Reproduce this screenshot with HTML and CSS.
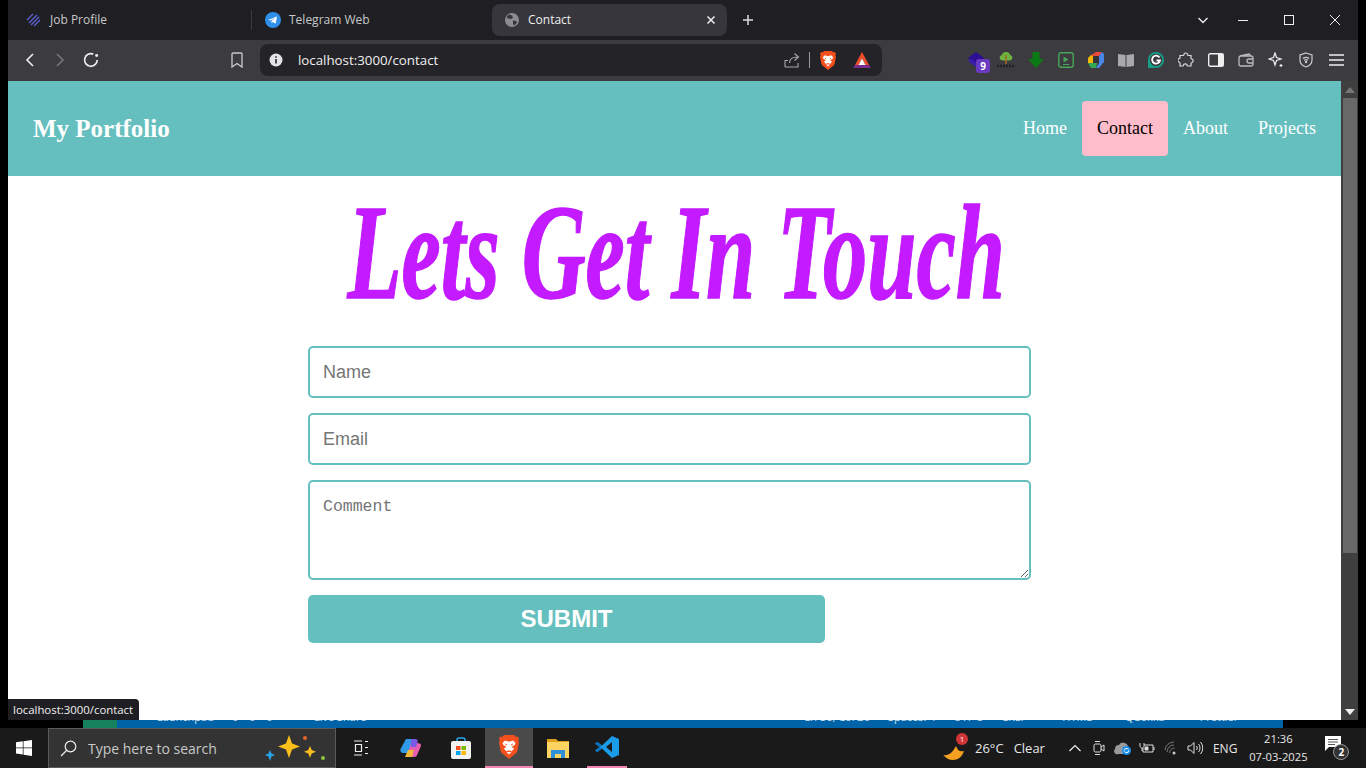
FILE: index.html
```html
<!DOCTYPE html>
<html>

<head>
<meta charset="utf-8">
<title>Contact</title>
<link rel="stylesheet" href="styles.css">
</head>

<body>
<svg class="defs" width="0" height="0">
  <symbol id="brave" viewBox="0 0 20 24">
    <path fill="#f4501e" d="M5 0h10l1.500 1.700 2-.3L20 3.500l-.7 2 .7 2-1.600 8.200c-.4 1.700-1.500 2.800-3 3.800L10 24l-5.400-4.500c-1.500-1-2.600-2.100-3-3.800L0 7.500l.7-2L0 3.500l1.500-2.100 2 .3z"/>
    <path fill="#fff" d="M6 5.500l4 1.200 4-1.200 2.500 2.500-.8 2-2.700 1.500.8 1.500 1.500.5-2.800 3-1.100-1H8.600l-1.100 1-2.800-3 1.500-.5.800-1.500L4.300 10l-.8-2z"/>
    <path fill="#fff" d="M7.500 17h5L10 19.500z"/>
    <path fill="#f4501e" d="M5.500 8.500l2.500.8-.8 1.200zM14.500 8.500l-2.500.8.800 1.200z"/>
  </symbol>
</svg>

<div class="desktop">
  <div class="window">
    <div class="tabbar">
      <div class="tab tab-first">
        <svg class="fav" width="16" height="16" viewBox="0 0 16 16" fill="none" stroke="#5a5fd0" stroke-width="1.400"><path d="M1 8l6-6M3 11l8-8M5 13l8-8M8 14l6-6"/></svg>
        <span>Job Profile</span>
      </div>
      <div class="tab tab-second">
        <svg class="fav" width="16" height="16" viewBox="0 0 16 16"><circle cx="8" cy="8" r="8" fill="#2f8fe8"/><path fill="#fff" d="M3 8l9-3.600-1.400 7.400-2.600-1.900-1.300 1.300-.3-2.300 3.700-3-4.800 2.700z"/></svg>
        <span>Telegram Web</span>
      </div>
      <div class="tab tab-active">
        <svg class="fav" width="14" height="14" viewBox="0 0 14 14"><circle cx="7" cy="7" r="7" fill="#8b8c90"/><path fill="#36363c" d="M4 1.500l3 1 1 2-2 1.500-3-.5-1.500-1.500zM8 7.500l3 .5 1 1.500-2.500 3-1.500-1.500z"/></svg>
        <span class="tab-name">Contact</span>
        <svg width="10" height="10" viewBox="0 0 10 10" stroke="#eee" stroke-width="1.500"><path d="M1.500 1.500l7 7M8.500 1.500l-7 7"/></svg>
      </div>
      <svg class="newtab" width="12" height="12" viewBox="0 0 12 12" stroke="#ddd" stroke-width="1.500"><path d="M6 1v10M1 6h10"/></svg>
      <div class="winbtns">
        <svg class="win-list" width="12" height="12" viewBox="0 0 12 12" fill="none" stroke="#eee" stroke-width="1.300"><path d="M1.500 4l4.500 4.500L10.500 4"/></svg>
        <svg width="12" height="12" viewBox="0 0 12 12" stroke="#eee"><path d="M1 6.500h10"/></svg>
        <svg width="12" height="12" viewBox="0 0 12 12" fill="none" stroke="#eee"><rect x="1.500" y="1.500" width="9" height="9"/></svg>
        <svg width="12" height="12" viewBox="0 0 12 12" stroke="#eee"><path d="M1 1l10 10M11 1L1 11"/></svg>
      </div>
    </div>

    <div class="toolbar">
      <div class="navbtns">
        <svg width="12" height="16" viewBox="0 0 12 16" fill="none" stroke="#eee" stroke-width="1.600"><path d="M9 2L3 8l6 6"/></svg>
        <svg width="12" height="16" viewBox="0 0 12 16" fill="none" stroke="#77777b" stroke-width="1.600"><path d="M3 2l6 6-6 6"/></svg>
        <svg class="reload" width="16" height="16" viewBox="0 0 16 16" fill="none" stroke="#eee" stroke-width="1.500"><path d="M13.500 8A5.600 5.600 0 1 1 10 2.800"/><circle cx="13" cy="4" r="1.300" fill="#eee" stroke="none"/></svg>
      </div>
      <svg class="bookmark" width="12" height="16" viewBox="0 0 12 16" fill="none" stroke="#ccc" stroke-width="1.300"><path d="M1 2a1 1 0 0 1 1-1h8a1 1 0 0 1 1 1v13L6 11.500 1 15z"/></svg>
      <div class="omnibox">
        <svg width="14" height="14" viewBox="0 0 14 14"><circle cx="7" cy="7" r="6.500" fill="#e4e4e6"/><path stroke="#232328" stroke-width="1.600" d="M7 6v4.500M7 3.300v1.500"/></svg>
        <span class="url">localhost:3000/contact</span>
        <svg class="share" width="16" height="16" viewBox="0 0 16 16" fill="none" stroke="#aaa" stroke-width="1.100"><path d="M1 15V8.500h3M1 15h13v-4M5.500 11c0-4 2.500-6 8-6M10.500 1.500l4 3.500-4 3.500"/></svg>
        <span class="omnisep"></span>
        <svg class="lion" width="16" height="19"><use href="#brave"/></svg>
        <svg class="bat" width="18" height="16" viewBox="0 0 18 16"><path fill="#7b2d8e" d="M0 16h18l-2-3H2z"/><path fill="#f04e2a" d="M9 0l7 13h-3.500L9 6.500 5.500 13H2z"/><path fill="#fff" d="M9 6.500l3.500 6.500h-7z"/></svg>
      </div>
      <div class="extensions">
        <span class="ext">
          <svg width="18" height="16" viewBox="0 0 18 16"><path fill="#2d0f96" d="M9 0l8 6-8 6-8-6z"/><path fill="#3c1cb0" d="M1 9l3-2 5 4 5-4 3 2-8 6z"/></svg>
          <b class="ext-count">9</b>
        </span>
        <span class="ext"><svg width="18" height="18" viewBox="0 0 18 18"><path fill="#6db33f" d="M9 1c3 0 4 2 4 3 2 .5 3 2 2 4-.5 1-2 1.500-6 1.500S3.500 9 3 8C2 6 3 4.500 5 4c0-1 1-3 4-3z"/><path stroke="#a06a20" stroke-width="1.500" d="M9 4v9"/><path stroke="#222" stroke-width="2.500" stroke-dasharray="2 1" d="M0 15h18"/></svg></span>
        <span class="ext"><svg width="16" height="16" viewBox="0 0 16 16"><path fill="#0c7a14" d="M4.500 0h7v7H16l-8 9-8-9h4.500z"/></svg></span>
        <span class="ext"><svg width="16" height="16" viewBox="0 0 16 16" fill="none"><rect x=".8" y=".8" width="14.400" height="14.400" rx="2" stroke="#46a858" stroke-width="1.400"/><path fill="#46a858" d="M5.500 4.500l5 3-5 3z"/><path stroke="#46a858" d="M5 12.500h6"/></svg></span>
        <span class="ext"><svg width="16" height="16" viewBox="0 0 16 16"><path fill="#e8493a" d="M3 3l5-3h6L11 4H5z"/><path fill="#f4b400" d="M0 6l3-3 2 1v7H0z"/><path fill="#34a853" d="M0 11h9l-1 5H3z"/><path fill="#4a86e8" d="M11 4l3-4 2 2v8l-5 6H8l3-5z"/><path fill="#333" d="M5 4h6v7H5z"/></svg></span>
        <span class="ext"><svg width="16" height="14" viewBox="0 0 16 14"><path fill="#a9a9ac" d="M0 1l7.500 1v12L0 13zM16 1L8.500 2v12l7.500-1z"/></svg></span>
        <span class="ext"><svg width="16" height="16" viewBox="0 0 16 16"><circle cx="8" cy="8" r="8" fill="#16a085"/><path fill="#16a085" d="M0 8v8h6z"/><circle cx="8" cy="8" r="6.200" fill="#3b3b40"/><path fill="none" stroke="#fff" stroke-width="1.800" d="M11.500 5.500A4 4 0 1 0 12 8.500H8.500"/></svg></span>
        <span class="ext"><svg width="16" height="16" viewBox="0 0 16 16" fill="none" stroke="#ddd" stroke-width="1.200"><path d="M6 2.500c0-2 3.500-2 3.500 0 0 1 .5 1 1.500 1h2v2.500c0 1 .5 1 1 1 1.500 0 1.500 3.500 0 3.500-.5 0-1 0-1 1v2.500h-3c-1 0-1-.5-1-1 0-1.500-3.500-1.500-3.500 0 0 .5 0 1-1 1H2v-3c0-1-.5-1-1-1-1.500 0-1.500-3.500 0-3.500.5 0 1 0 1-1V3.500h3c.5 0 1-.2 1-1z"/></svg></span>
        <span class="ext"><svg width="16" height="14" viewBox="0 0 16 14"><rect x=".7" y=".7" width="14.600" height="12.600" rx="1.500" fill="none" stroke="#eee" stroke-width="1.400"/><rect x="10" y="1" width="5" height="12" fill="#eee"/></svg></span>
        <span class="ext"><svg width="16" height="14" viewBox="0 0 16 14" fill="none" stroke="#bbb" stroke-width="1.300"><path d="M13 3H3a2 2 0 0 0-2 2v6a2 2 0 0 0 2 2h10a2 2 0 0 0 2-2V5a2 2 0 0 0-2-2zM2 3l9-2 2 2M15 6h-4a2 2 0 0 0 0 4h4"/></svg></span>
        <span class="ext"><svg width="16" height="16" viewBox="0 0 16 16" fill="none" stroke="#eee" stroke-width="1.200"><path d="M7 1l1.500 4.500L13 7 8.500 8.500 7 13 5.500 8.500 1 7l4.500-1.500z"/><path d="M13 12v3M11.500 13.500h3"/></svg></span>
        <span class="ext"><svg width="14" height="16" viewBox="0 0 14 16" fill="none" stroke="#ccc" stroke-width="1.200"><path d="M7 1l6 2v5c0 3.500-3 6-6 7-3-1-6-3.500-6-7V3z"/><path d="M3.800 6.500c2-1.500 4.400-1.500 6.400 0M5.200 8.300c1.100-.8 2.500-.8 3.600 0"/><circle cx="7" cy="10" r=".6" fill="#ccc"/></svg></span>
        <span class="ext"><svg width="15" height="12" viewBox="0 0 15 12" stroke="#eee" stroke-width="1.300"><path d="M0 1h15M0 6h15M0 11h15"/></svg></span>
      </div>
    </div>

    <div class="viewport">
      <div class="page">
        <div class="site-nav">
          <div class="site-title">My Portfolio</div>
          <div class="site-links">
            <a href="#home">Home</a>
            <a href="#contact" class="current">Contact</a>
            <a href="#about">About</a>
            <a href="#projects">Projects</a>
          </div>
        </div>
        <h1 class="touch-title">Lets Get In Touch</h1>
        <form class="contact-form">
          <input type="text" placeholder="Name">
          <input type="text" placeholder="Email">
          <textarea placeholder="Comment"></textarea>
          <button type="button">SUBMIT</button>
        </form>
        <div class="link-status">localhost:3000/contact</div>
      </div>
      <div class="scrollbar">
        <svg class="arrow" width="10" height="6" viewBox="0 0 10 6"><path fill="#777" d="M5 0l5 6H0z"/></svg>
        <div class="thumb"></div>
        <svg class="arrow" width="10" height="6" viewBox="0 0 10 6"><path fill="#eee" d="M0 0h10L5 6z"/></svg>
      </div>
    </div>
  </div>

  <div class="editor-strip">
    <span class="strip-green"></span>
    <div class="strip-blue">
      <span class="strip-launch">Launchpad</span>
      <span class="strip-errors">0 0 0</span>
      <span class="strip-live">Live Share</span>
      <span class="strip-ln">Ln 56, Col 20</span>
      <span>Spaces: 4</span>
      <span>UTF-8</span>
      <span>CRLF</span>
      <span class="strip-html">HTML</span>
      <span class="strip-quokka">Quokka</span>
      <span class="strip-prettier">Prettier</span>
    </div>
  </div>

  <div class="taskbar">
    <svg class="start" width="16" height="16" viewBox="0 0 16 16"><path fill="#fff" d="M0 2.300l6.800-1v6.200H0zM7.500 1.200L16 0v7.500H7.500zM0 8.300h6.800v6.300l-6.800-1zM7.500 8.300H16V16l-8.500-1.200z"/></svg>
    <div class="searchbox">
      <svg width="17" height="17" viewBox="0 0 17 17" fill="none" stroke="#eee" stroke-width="1.200"><circle cx="10.500" cy="6.500" r="5.300"/><path d="M6.500 10.500L1 16"/></svg>
      <span class="search-text">Type here to search</span>
      <svg class="sparkles" width="62" height="30" viewBox="0 0 62 30"><path fill="#2aa3e8" d="M6 17l1.500 3.500L11 22l-3.500 1.500L6 28l-1.500-4.500L1 22l3.500-1.500z"/><path fill="#fbbf1c" d="M25 2l3 8.500 8 3-8 3L25 25l-3-8.500-8-3 8-3z"/><path fill="#fbbf1c" d="M46 13l1.700 4 4.300 1.700-4.300 1.700-1.700 4.300-1.700-4.300-4.300-1.700 4.300-1.700z"/><circle cx="41" cy="5" r="2" fill="#e8662c"/><circle cx="59" cy="25" r="2" fill="#8cc63f"/></svg>
    </div>
    <div class="task-icons">
      <span class="task task-wide"><svg width="16" height="16" viewBox="0 0 16 16" fill="none" stroke="#eee" stroke-width="1.200"><path d="M1 1h8M1 15h8M2.500 4.500h6v7h-6zM12 1.500h3M12 7.500h3M12 13.500h3"/></svg></span>
      <span class="task task-wide"><svg width="22" height="22" viewBox="0 0 22 22"><path fill="#2f9be8" d="M6 2h7l-4 14H3C1 16 0 14 .5 12z"/><path fill="#e85fb0" d="M16 6h-5L7 20h7c2 0 3-1 3.500-3L21 9c.5-2-1-3-5-3z"/><path fill="#f5b93a" d="M5 20l3-7h6l-2 7z"/><path fill="#7a5be8" d="M11 2h4c2 0 3 1 2.500 3L16 10h-5z"/></svg></span>
      <span class="task"><svg width="20" height="22" viewBox="0 0 20 22"><path fill="none" stroke="#2aa3e8" stroke-width="1.500" d="M6 5V3a2 2 0 0 1 2-2h4a2 2 0 0 1 2 2v2"/><rect y="4" width="20" height="18" rx="2" fill="#f2f2f2"/><path fill="#f25022" d="M5 9h4.500v4H5z"/><path fill="#7fba00" d="M10.500 9H15v4h-4.500z"/><path fill="#00a4ef" d="M5 14h4.500v4H5z"/><path fill="#ffb900" d="M10.500 14H15v4h-4.500z"/></svg></span>
      <span class="task task-open"><svg width="20" height="24"><use href="#brave"/></svg></span>
      <span class="task"><svg width="22" height="20" viewBox="0 0 22 20"><path fill="#dfa01e" d="M0 1h9l2 2h11v4H0z"/><path fill="#fcd462" d="M0 4h22v16H0z"/><path fill="#2f8fd8" d="M4 12h14v8h-4v-4H8v4H4z"/></svg></span>
      <span class="task task-pinned"><svg width="24" height="24" viewBox="0 0 24 24"><path fill="#1a9ce8" d="M17 1l7 3v16l-7 3-10-9.500L2.500 17 0 15.500 4.500 12 0 8.500 2.500 7 7 10.500zM17 7l-6 5 6 5z"/><path fill="#0a6fb8" d="M0 8.500L2.500 7l4.500 3.500L4.500 12zM0 15.500L4.500 12 7 13.500 2.500 17z"/></svg></span>
    </div>
    <div class="tray">
      <span class="weather-icon">
        <svg width="24" height="24" viewBox="0 0 24 24"><path fill="#f5a020" d="M0 19c4 1 9-1 13-9 2 5 4 6 8 5-2 6-6 9-11 9-4 0-7-2-10-5z"/></svg>
        <b class="weather-badge">1</b>
      </span>
      <span class="temp">26°C</span>
      <span class="sky">Clear</span>
      <svg class="tray-chevron" width="12" height="8" viewBox="0 0 12 8" fill="none" stroke="#eee" stroke-width="1.200"><path d="M.5 7L6 1.500 11.500 7"/></svg>
      <svg class="tray-meet" width="12" height="16" viewBox="0 0 12 16" fill="none" stroke="#ddd"><rect x="1" y="4" width="7" height="8" rx="1.500"/><path d="M8 7l3-2v6l-3-2M2 1.500h5M2 14.500h5"/></svg>
      <svg class="tray-cloud" width="18" height="14" viewBox="0 0 18 14"><path fill="#9a9a9d" d="M1 8a4 4 0 0 1 4-4 5 5 0 0 1 9 1l-3 8H4a3 3 0 0 1-3-5z"/><circle cx="12.500" cy="9.500" r="4.500" fill="#1a8fe8"/><path stroke="#fff" fill="none" d="M10 9.500a2.500 2.500 0 0 1 4.500-1M15 9.500a2.500 2.500 0 0 1-4.500 1"/></svg>
      <svg class="tray-power" width="16" height="12" viewBox="0 0 16 12" fill="none" stroke="#ddd"><path d="M5 3h9v7H4V6M15 5v3M1 1v3c0 1 1 2 2 2s2-1 2-2V1M3 6v3"/><path fill="#ddd" d="M6 5h3v3H6z"/></svg>
      <svg class="tray-wifi" width="15" height="14" viewBox="0 0 15 14" fill="none" stroke="#77777a"><path d="M1 9a9 9 0 0 1 9-8M3 11a7 7 0 0 1 7-7M5.500 12a5 5 0 0 1 5-5"/><circle cx="10" cy="12" r="1.500" fill="#ccc" stroke="none"/></svg>
      <svg class="tray-sound" width="16" height="14" viewBox="0 0 16 14" fill="none" stroke="#ddd"><path d="M1 5h2.500L7 1.500v11L3.500 9H1zM9.500 5a3 3 0 0 1 0 4M11.500 3a6 6 0 0 1 0 8M13.500 1a9 9 0 0 1 0 12"/></svg>
      <span class="lang">ENG</span>
      <div class="clock">
        <span>21:36</span>
        <span>07-03-2025</span>
      </div>
      <span class="notify">
        <svg width="18" height="15" viewBox="0 0 18 15"><path fill="#fff" d="M0 0h16v11H4l-4 4z"/><path stroke="#555" d="M3 3.500h10M3 6h10M3 8.500h7"/></svg>
        <b class="notify-count">2</b>
      </span>
    </div>
  </div>
</div>
</body>
</html>
```

FILE: styles.css
```css
* {
  box-sizing: border-box;
}

html, body {
  margin: 0;
  height: 100%;
  overflow: hidden;
}

.defs {
  position: absolute;
}

.desktop {
  width: 1366px;
  height: 768px;
  background: #000;
  display: flex;
  flex-direction: column;
  font-family: "Open Sans", "Noto Sans", sans-serif;
  color: #ddd;
}

.window {
  margin: 0 8px;
  height: 720px;
  display: flex;
  flex-direction: column;
  flex: none;
}

/* Browser tabs */
.tabbar {
  height: 40px;
  flex: none;
  background: #1f1f23;
  display: flex;
  align-items: center;
  font-size: 12px;
}

.tab {
  display: flex;
  align-items: center;
  height: 32px;
}

.tab span {
  margin-top: -2px;
}

.fav {
  flex: none;
}

.tab-first {
  width: 244px;
  padding-left: 18px;
  gap: 8px;
  border-right: 1px solid #3c3c40;
  height: 20px;
  color: #c8c8ca;
}

.tab-second {
  width: 240px;
  padding-left: 13px;
  gap: 8px;
  color: #c8c8ca;
}

.tab-active {
  width: 235px;
  padding: 0 11px 0 13px;
  gap: 9px;
  background: #36363c;
  border-radius: 8px;
  color: #f0f0f0;
}

.tab-name {
  flex: 1;
}

.newtab {
  margin-left: 15px;
}

.winbtns {
  margin-left: auto;
  display: flex;
  gap: 34px;
  padding-right: 17px;
}

.winbtns .win-list {
  margin-right: -6px;
}

/* Address bar row */
.toolbar {
  height: 41px;
  flex: none;
  background: #3b3b40;
  display: flex;
  align-items: center;
  padding-bottom: 1px;
}

.navbtns {
  display: flex;
  align-items: center;
  gap: 18px;
  padding-left: 16px;
}

.navbtns .reload {
  margin-left: -2px;
  width: 18px;
  height: 18px;
}

.bookmark {
  margin-left: 131px;
}

.omnibox {
  width: 622px;
  height: 32px;
  margin-left: 17px;
  background: #232328;
  border-radius: 8px;
  display: flex;
  align-items: center;
  padding: 0 11px 0 9px;
}

.url {
  margin-left: 15px;
  font-size: 13.300px;
  color: #f0f0f0;
  flex: 1;
}

.omnisep {
  width: 1px;
  height: 16px;
  background: #999;
  margin: 0 10px 0 9px;
}

.bat {
  margin-left: 17px;
}

.extensions {
  display: flex;
  margin-left: 79px;
}

.ext {
  position: relative;
  width: 30px;
  height: 20px;
  display: flex;
  align-items: center;
  justify-content: center;
}

.ext-count {
  position: absolute;
  left: 15px;
  top: 9px;
  width: 14px;
  height: 14px;
  border-radius: 3px;
  background: #6a3bc0;
  color: #fff;
  font-size: 10px;
  line-height: 14px;
  text-align: center;
}

/* The page itself */
.viewport {
  height: 639px;
  flex: none;
  display: flex;
}

.page {
  position: relative;
  flex: 1;
  background: #fff;
  overflow: hidden;
}

.site-nav {
  height: 95px;
  background: #66bfbf;
  display: flex;
  align-items: flex-start;
  justify-content: space-between;
  padding: 20px 10px 0 25px;
  font-family: "Liberation Serif", serif;
}

.site-title {
  font-size: 25px;
  font-weight: bold;
  color: #fff;
  line-height: 55px;
}

.site-links {
  display: flex;
}

.site-links a {
  height: 55px;
  padding: 0 15px;
  line-height: 55px;
  font-size: 18px;
  color: #fff;
  text-decoration: none;
  border-radius: 4px;
}

.site-links a.current {
  background: #ffbccb;
  color: #000;
}

.touch-title {
  margin: 0;
  height: 170px;
  padding-left: 5px;
  font-family: "Liberation Serif", serif;
  font-size: 136px;
  font-style: italic;
  font-weight: bold;
  line-height: 153px;
  text-align: center;
  white-space: nowrap;
  color: #c31aff;
  -webkit-text-stroke: 1.500px #c31aff;
  transform: scaleX(0.65);
}

.contact-form {
  width: 723px;
  margin-left: 300px;
  display: flex;
  flex-direction: column;
  gap: 15px;
}

.contact-form input,
.contact-form textarea {
  display: block;
  width: 100%;
  border: 2px solid #66bfbf;
  border-radius: 5px;
  padding: 0 13px;
  background: #fff;
  outline: none;
}

.contact-form input {
  height: 52px;
  font-family: "Liberation Sans", sans-serif;
  font-size: 18px;
}

.contact-form textarea {
  height: 100px;
  padding-top: 15px;
  font-family: "Liberation Mono", monospace;
  font-size: 16.500px;
}

.contact-form ::placeholder {
  color: #757575;
}

.contact-form button {
  width: 517px;
  height: 48px;
  border: none;
  border-radius: 5px;
  background: #66bfbf;
  color: #fff;
  font-family: "Liberation Sans", sans-serif;
  font-size: 24px;
  font-weight: bold;
}

.link-status {
  position: absolute;
  left: 0;
  bottom: 0;
  width: 131px;
  height: 21px;
  padding-left: 5px;
  background: #1f1f23;
  border-radius: 0 4px 0 0;
  color: #f0f0f0;
  font-size: 11.400px;
  line-height: 21px;
  white-space: nowrap;
}

.scrollbar {
  width: 17px;
  flex: none;
  background: #3f3f3f;
  display: flex;
  flex-direction: column;
  align-items: center;
  padding: 6px 0 5px;
}

.thumb {
  width: 14px;
  height: 455px;
  margin-top: 5px;
  background: #686868;
  margin-bottom: auto;
}

/* Editor peeking out behind the browser */
.editor-strip {
  height: 8px;
  flex: none;
  display: flex;
  padding-left: 83px;
  padding-right: 83px;
  overflow: hidden;
  font-size: 11px;
  color: #cfe3f3;
}

.strip-green {
  width: 34px;
  background: #16825d;
}

.strip-blue {
  flex: 1;
  background: #0063a8;
  display: flex;
  gap: 18px;
  height: 8px;
  padding-left: 40px;
  line-height: 8px;
  white-space: nowrap;
}

.strip-blue span {
  margin-top: -7px;
}

.strip-errors {
  width: 48px;
  word-spacing: 8px;
}

.strip-live {
  margin-left: 16px;
}

.strip-ln {
  margin-left: 420px;
}

.strip-html {
  margin-left: 18px;
}

.strip-quokka {
  margin-left: 15px;
}

.strip-prettier {
  margin-left: 17px;
}

/* Windows taskbar */
.taskbar {
  height: 40px;
  flex: none;
  background: #1a1a1a;
  display: flex;
  align-items: center;
  color: #e8e8e8;
}

.start {
  margin-left: 16px;
}

.searchbox {
  width: 288px;
  height: 40px;
  margin-left: 16px;
  background: #333;
  border: 1px solid #5a5a5a;
  display: flex;
  align-items: center;
  padding-left: 11px;
}

.search-text {
  margin-left: 11px;
  font-size: 14px;
  color: #c9c9c9;
  flex: 1;
}

.sparkles {
  margin-right: 9px;
}

.task-icons {
  display: flex;
}

.task {
  width: 49px;
  height: 40px;
  display: flex;
  align-items: center;
  justify-content: center;
}

.task-wide {
  width: 50px;
}

.task-open {
  width: 48px;
  background: #4a4a4a;
  border-bottom: 2px solid #f586b4;
}

.task-pinned {
  width: 40px;
  margin-left: 5px;
  border-bottom: 2px solid #f586b4;
}

.tray {
  flex: 1;
  display: flex;
  align-items: center;
  padding-left: 316px;
  font-size: 13px;
}

.weather-icon {
  position: relative;
  width: 24px;
  height: 24px;
}

.weather-badge {
  position: absolute;
  right: -1px;
  top: -3px;
  width: 12px;
  height: 12px;
  border-radius: 50%;
  background: #d13438;
  color: #fff;
  font-size: 8px;
  font-weight: normal;
  line-height: 12px;
  text-align: center;
}

.temp {
  margin-left: 8px;
}

.sky {
  margin-left: 10px;
}

.tray-chevron {
  margin-left: 24px;
}

.tray-meet {
  margin-left: 12px;
}

.tray-cloud {
  margin-left: 9px;
}

.tray-power {
  margin-left: 7px;
}

.tray-wifi {
  margin-left: 9px;
}

.tray-sound {
  margin-left: 8px;
}

.lang {
  margin-left: 10px;
  font-size: 12px;
}

.clock {
  width: 70px;
  margin-left: 6px;
  display: flex;
  flex-direction: column;
  align-items: center;
  font-size: 11.200px;
  line-height: 18px;
}

.notify {
  position: relative;
  margin-left: 12px;
  width: 24px;
  height: 24px;
  display: block;
}

.notify-count {
  position: absolute;
  left: 8px;
  top: 8px;
  width: 16px;
  height: 16px;
  border: 1px solid #999;
  border-radius: 50%;
  background: #333;
  color: #fff;
  font-size: 10px;
  line-height: 14px;
  text-align: center;
}
```
